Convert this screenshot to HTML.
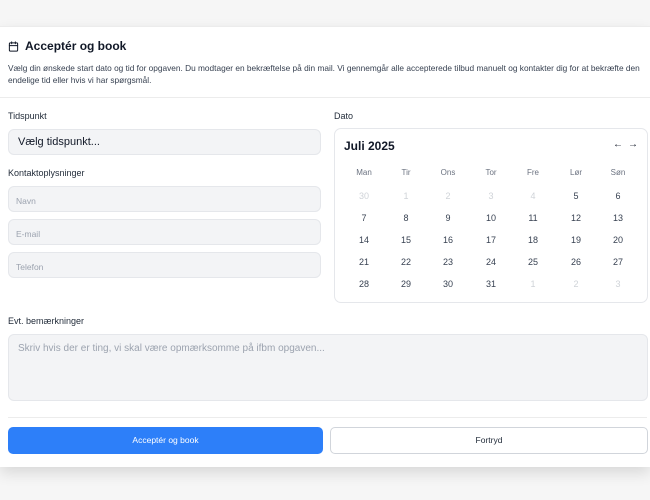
<!DOCTYPE html>
<html><head><meta charset="utf-8"><style>
*{box-sizing:border-box;margin:0;padding:0}
body{width:650px;height:500px;background:#f6f6f6;font-family:"Liberation Sans",sans-serif;color:#111827;position:relative;overflow:hidden}
.card{position:absolute;left:0;top:26px;width:650px;height:441px;background:#fff;box-shadow:0 6px 14px rgba(0,0,0,.12);border-top:1px solid #ececec}
.a{position:absolute}
.lbl{font-size:9px;color:#1f2937}
.inp{position:absolute;left:8px;width:313px;height:26px;border:1px solid #e5e7eb;border-radius:6px;background:#f3f4f6;font-size:8.5px;color:#9ca3af;padding:9px 7px}
.hr{position:absolute;left:0;right:0;height:1px;background:#ececec}
.cal{position:absolute;left:334px;top:128px;width:314px;height:175px;border:1px solid #e5e7eb;border-radius:7px}
.d{position:absolute;width:30px;margin-left:-15px;text-align:center;font-size:9px;color:#374151}
.w{color:#6b7280;font-size:8px}
.m{color:#cfd3d8}
</style></head><body>
<div class="card"></div>
<svg class="a" style="left:8px;top:41px" width="11" height="11" viewBox="0 0 24 24" fill="none" stroke="#111827" stroke-width="2.2" stroke-linecap="round"><rect x="3" y="4" width="18" height="18" rx="2"/><path d="M16 2v4M8 2v4M3 10h18"/></svg>
<div class="a" style="left:25px;top:39px;font-size:12px;font-weight:bold">Acceptér og book</div>
<div class="a" style="left:8px;top:62px;width:640px;font-size:8.3px;line-height:12px;color:#374151">Vælg din ønskede start dato og tid for opgaven. Du modtager en bekræftelse på din mail. Vi gennemgår alle accepterede tilbud manuelt og kontakter dig for at bekræfte den endelige tid eller hvis vi har spørgsmål.</div>
<div class="hr" style="top:97px"></div>
<div class="a lbl" style="left:8px;top:111px">Tidspunkt</div>
<div class="inp" style="top:129px;font-size:11px;color:#111827;padding:6px 9px">Vælg tidspunkt...</div>
<div class="a lbl" style="left:8px;top:168px">Kontaktoplysninger</div>
<div class="inp" style="top:186px">Navn</div>
<div class="inp" style="top:219px">E-mail</div>
<div class="inp" style="top:252px">Telefon</div>
<div class="a lbl" style="left:334px;top:111px">Dato</div>
<div class="cal"></div>
<div class="a" style="left:344px;top:139px;font-size:12px;font-weight:bold;color:#111827">Juli 2025</div>
<div class="a" style="left:613px;top:139px;font-size:10px">←</div>
<div class="a" style="left:628px;top:139px;font-size:10px">→</div>
<div id="g"></div>
<div class="a lbl" style="left:8px;top:316px">Evt. bemærkninger</div>
<div class="a" style="left:8px;top:334px;width:640px;height:67px;border:1px solid #e5e7eb;border-radius:6px;background:#f3f4f6;font-size:10px;color:#9ca3af;padding:8px 9px">Skriv hvis der er ting, vi skal være opmærksomme på ifbm opgaven...</div>
<div class="hr" style="top:417px;left:8px;right:3px"></div>
<div class="a" style="left:8px;top:427px;width:315px;height:27px;background:#2d7ff9;border-radius:5px;color:#fff;font-size:8.5px;text-align:center;line-height:27px">Acceptér og book</div>
<div class="a" style="left:330px;top:427px;width:318px;height:27px;background:#fff;border:1px solid #d1d5db;border-radius:5px;color:#1f2937;font-size:8.5px;text-align:center;line-height:25px">Fortryd</div>
<script>
var xs=[364,406,448,491,533,576,618],ys=[191,213,235,257,279],h='';
['Man','Tir','Ons','Tor','Fre','Lør','Søn'].forEach((t,i)=>h+=`<div class="d w" style="left:${xs[i]}px;top:168px">${t}</div>`);
var days=[[30,1],[1,1],[2,1],[3,1],[4,1]];for(var i=5;i<=31;i++)days.push([i,0]);days.push([1,1],[2,1],[3,1]);
days.forEach((d,k)=>h+=`<div class="d${d[1]?' m':''}" style="left:${xs[k%7]}px;top:${ys[Math.floor(k/7)]}px">${d[0]}</div>`);
document.getElementById('g').innerHTML=h;
</script>
</body></html>
